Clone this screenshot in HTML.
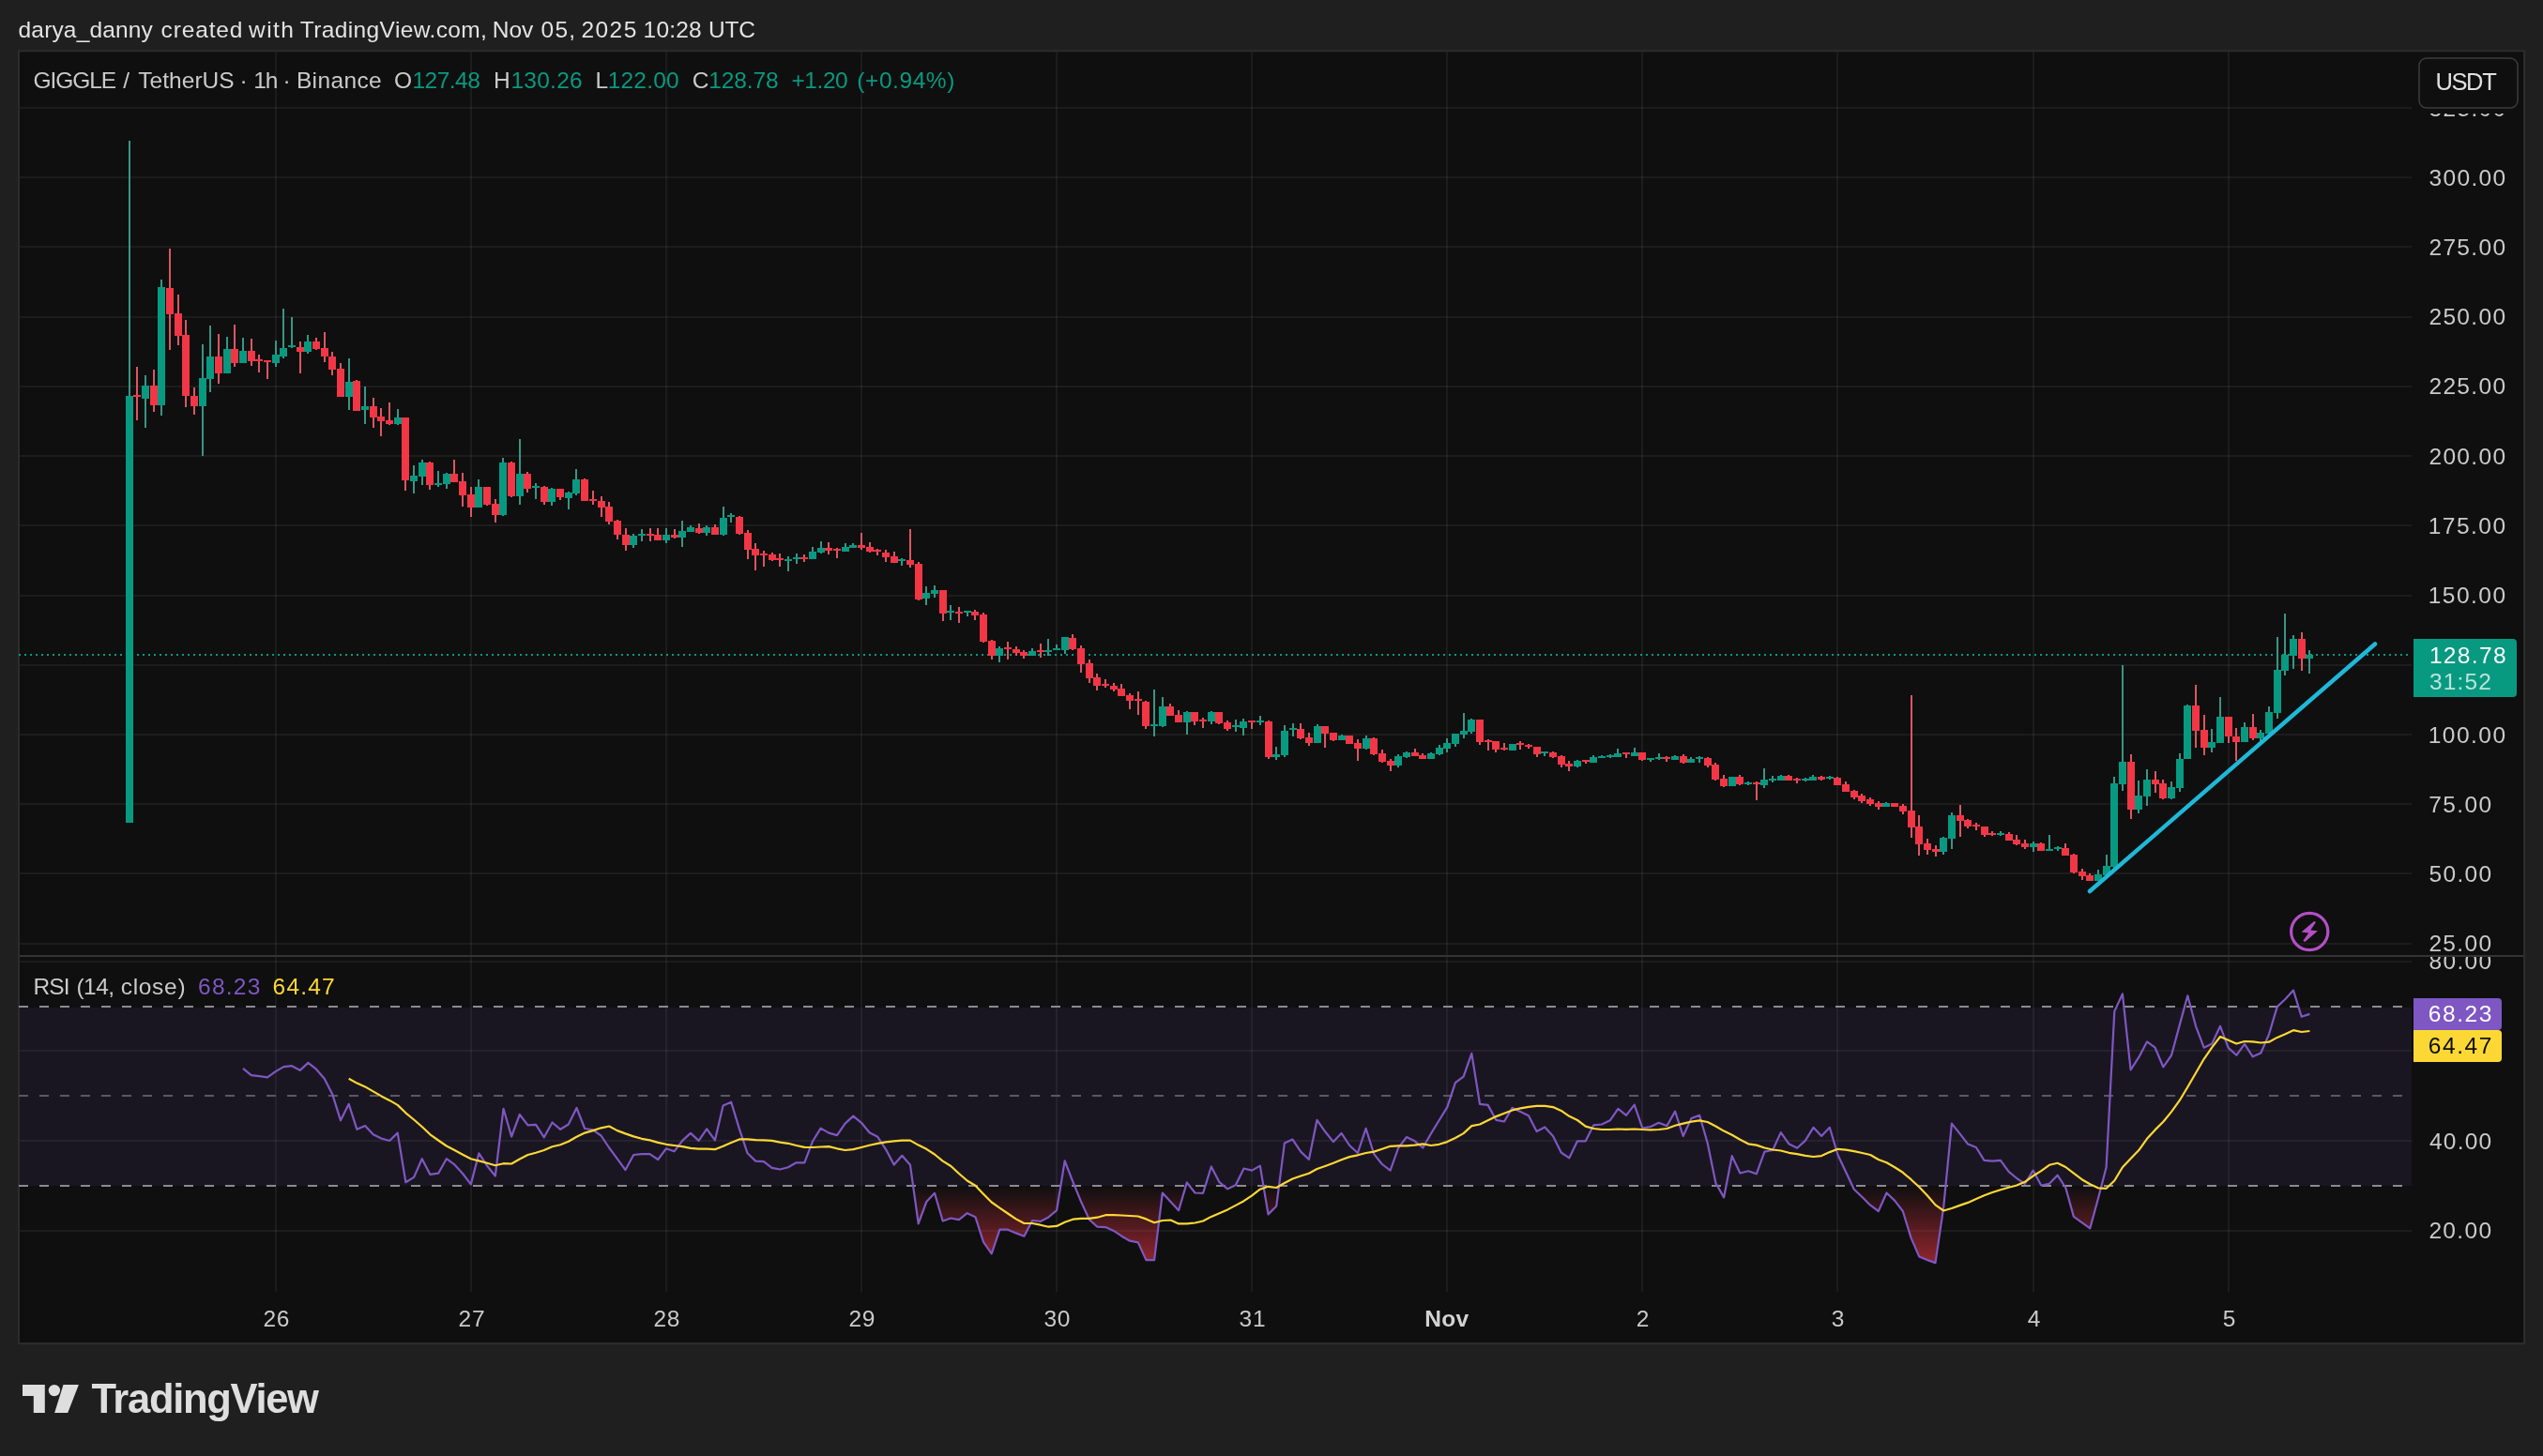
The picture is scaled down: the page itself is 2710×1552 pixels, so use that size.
<!DOCTYPE html><html><head><meta charset="utf-8"><title>GIGGLE / TetherUS</title>
<style>
html,body{margin:0;padding:0;background:#1f1f1f;}
body{width:2710px;height:1552px;overflow:hidden;position:relative;font-family:"Liberation Sans",sans-serif;}
svg{position:absolute;left:0;top:0;display:block;will-change:transform}
text{font-family:"Liberation Sans",sans-serif;white-space:pre}
</style></head><body>
<svg width="2710" height="1552" viewBox="0 0 2710 1552">
<rect x="0" y="0" width="2710" height="1552" fill="#1f1f1f"/>
<rect x="19" y="53.3" width="2672.3" height="1380" fill="#2c2c2c"/>
<rect x="21" y="55.3" width="2668" height="1375.7" fill="#0f0f0f"/>
<text x="19.60" y="40.1" font-size="24.5" fill="#e3e3e3" letter-spacing="0.150">darya_danny</text>
<text x="171.60" y="40.1" font-size="24.5" fill="#e3e3e3" letter-spacing="0.850">created</text>
<text x="265.10" y="40.1" font-size="24.5" fill="#e3e3e3" letter-spacing="1.433">with</text>
<text x="319.80" y="40.1" font-size="24.5" fill="#e3e3e3" letter-spacing="0.380">TradingView.com,</text>
<text x="524.80" y="40.1" font-size="24.5" fill="#e3e3e3" letter-spacing="0.000">Nov</text>
<text x="576.50" y="40.1" font-size="24.5" fill="#e3e3e3" letter-spacing="1.300">05,</text>
<text x="619.50" y="40.1" font-size="24.5" fill="#e3e3e3" letter-spacing="1.433">2025</text>
<text x="685.60" y="40.1" font-size="24.5" fill="#e3e3e3" letter-spacing="0.175">10:28</text>
<text x="754.90" y="40.1" font-size="24.5" fill="#e3e3e3" letter-spacing="-0.100">UTC</text>
<defs><linearGradient id="os" x1="0" y1="1263.8" x2="0" y2="1407.4" gradientUnits="userSpaceOnUse"><stop offset="0" stop-color="#f23645" stop-opacity="0"/><stop offset="1" stop-color="#f23645" stop-opacity="1"/></linearGradient><linearGradient id="ob" x1="0" y1="1072.4" x2="0" y2="928.9" gradientUnits="userSpaceOnUse"><stop offset="0" stop-color="#089981" stop-opacity="0"/><stop offset="1" stop-color="#089981" stop-opacity="1"/></linearGradient><clipPath id="cos"><rect x="22" y="1263.8" width="2548" height="113.2"/></clipPath><clipPath id="cob"><rect x="22" y="1020" width="2548" height="52.4"/></clipPath><clipPath id="cax"><rect x="2570" y="121" width="119" height="897"/></clipPath><clipPath id="crs"><rect x="2570" y="1020" width="119" height="357"/></clipPath></defs>
<rect x="21" y="1074" width="2549" height="190" fill="#7e57c2" fill-opacity="0.1"/>
<path d="M294 55.3V1377.5M502 55.3V1377.5M710 55.3V1377.5M918 55.3V1377.5M1126 55.3V1377.5M1334 55.3V1377.5M1542 55.3V1377.5M1750 55.3V1377.5M1958 55.3V1377.5M2167 55.3V1377.5M2375 55.3V1377.5" stroke="#ffffff" stroke-opacity="0.055" stroke-width="2" fill="none"/>
<path d="M21 1006H2570M21 931H2570M21 857H2570M21 783H2570M21 709H2570M21 635H2570M21 560H2570M21 486H2570M21 412H2570M21 338H2570M21 263H2570M21 189H2570M21 115H2570M21 1025H2570M21 1120H2570M21 1216H2570M21 1312H2570" stroke="#ffffff" stroke-opacity="0.055" stroke-width="2" fill="none"/>
<rect x="21" y="1018" width="2668" height="2" fill="#343434"/>
<path d="M20 1073H2570" stroke="#8c8a90" stroke-width="2" stroke-dasharray="10 12" fill="none"/>
<path d="M20 1168H2570" stroke="#5a5860" stroke-width="2" stroke-dasharray="10 12" fill="none"/>
<path d="M20 1264H2570" stroke="#8c8a90" stroke-width="2" stroke-dasharray="10 12" fill="none"/>
<path d="M259.0 1138.9L267.7 1146.2L276.3 1147.1L285.0 1148.4L293.7 1142.1L302.3 1137.1L311.0 1136.2L319.7 1140.9L328.4 1132.9L337.0 1139.7L345.7 1149.7L354.4 1166.8L363.0 1194.3L371.7 1176.8L380.4 1203.8L389.1 1200.1L397.7 1209.3L406.4 1213.5L415.1 1216.0L423.7 1207.6L432.4 1260.2L441.1 1254.9L449.7 1235.2L458.4 1251.9L467.1 1250.7L475.8 1235.2L484.4 1241.4L493.1 1251.0L501.8 1262.4L510.4 1229.3L519.1 1242.7L527.8 1253.5L536.5 1181.8L545.1 1211.5L553.8 1188.0L562.5 1199.3L571.1 1198.8L579.8 1212.3L588.5 1196.5L597.2 1203.8L605.8 1198.5L614.5 1181.0L623.2 1203.0L631.8 1204.3L640.5 1210.5L649.2 1223.5L657.8 1235.1L666.5 1247.1L675.2 1231.0L683.9 1230.1L692.5 1230.1L701.2 1236.0L709.9 1224.3L718.5 1227.3L727.2 1215.9L735.9 1207.9L744.6 1215.9L753.2 1203.4L761.9 1215.4L770.6 1178.4L779.2 1174.7L787.9 1203.4L796.6 1229.3L805.3 1237.6L813.9 1238.1L822.6 1244.8L831.3 1246.5L839.9 1244.3L848.6 1239.3L857.3 1239.3L865.9 1216.8L874.6 1202.6L883.3 1207.6L892.0 1210.1L900.6 1197.6L909.3 1189.6L918.0 1196.8L926.6 1207.3L935.3 1211.8L944.0 1225.1L952.7 1241.5L961.3 1231.8L970.0 1241.8L978.7 1304.4L987.3 1281.0L996.0 1271.8L1004.7 1301.5L1013.4 1298.5L1022.0 1300.2L1030.7 1293.2L1039.4 1297.2L1048.0 1323.9L1056.7 1336.4L1065.4 1310.7L1074.0 1310.7L1082.7 1314.4L1091.4 1317.7L1100.1 1301.0L1108.7 1301.9L1117.4 1297.4L1126.1 1290.2L1134.7 1237.3L1143.4 1259.8L1152.1 1281.0L1160.8 1299.9L1169.4 1307.7L1178.1 1308.1L1186.8 1311.9L1195.4 1317.7L1204.1 1322.7L1212.8 1324.4L1221.4 1343.1L1230.1 1343.1L1238.8 1271.5L1247.5 1281.0L1256.1 1290.2L1264.8 1260.5L1273.5 1271.5L1282.1 1271.8L1290.8 1243.5L1299.5 1260.2L1308.2 1267.3L1316.8 1263.2L1325.5 1245.5L1334.2 1247.6L1342.8 1242.6L1351.5 1294.4L1360.2 1285.7L1368.9 1218.4L1377.5 1214.6L1386.2 1227.6L1394.9 1236.0L1403.5 1193.8L1412.2 1206.3L1420.9 1217.1L1429.5 1207.9L1438.2 1221.0L1446.9 1229.0L1455.6 1202.9L1464.2 1230.1L1472.9 1241.0L1481.6 1247.7L1490.2 1223.5L1498.9 1212.1L1507.6 1216.3L1516.3 1223.5L1524.9 1208.5L1533.6 1194.3L1542.3 1180.1L1550.9 1154.2L1559.6 1147.6L1568.3 1122.9L1577.0 1176.8L1585.6 1177.9L1594.3 1193.8L1603.0 1195.5L1611.6 1180.9L1620.3 1185.1L1629.0 1189.3L1637.6 1206.0L1646.3 1201.5L1655.0 1211.0L1663.7 1228.5L1672.3 1234.3L1681.0 1216.3L1689.7 1216.3L1698.3 1199.3L1707.0 1198.5L1715.7 1194.3L1724.4 1181.8L1733.0 1188.8L1741.7 1177.6L1750.4 1202.6L1759.0 1201.0L1767.7 1196.8L1776.4 1200.1L1785.1 1184.6L1793.7 1211.0L1802.4 1192.1L1811.1 1188.8L1819.7 1218.5L1828.4 1261.0L1837.1 1276.4L1845.7 1232.2L1854.4 1250.5L1863.1 1248.2L1871.8 1251.3L1880.4 1227.6L1889.1 1226.0L1897.8 1207.1L1906.4 1219.3L1915.1 1223.8L1923.8 1215.9L1932.5 1201.8L1941.1 1210.9L1949.8 1201.8L1958.5 1231.0L1967.1 1249.3L1975.8 1267.7L1984.5 1276.0L1993.2 1284.7L2001.8 1291.0L2010.5 1271.5L2019.2 1279.9L2027.8 1291.0L2036.5 1319.4L2045.2 1339.4L2053.8 1343.1L2062.5 1346.1L2071.2 1286.9L2079.9 1197.6L2088.5 1208.4L2097.2 1219.6L2105.9 1223.0L2114.5 1236.8L2123.2 1237.6L2131.9 1236.8L2140.6 1248.8L2149.2 1256.0L2157.9 1261.8L2166.6 1247.6L2175.2 1263.5L2183.9 1261.8L2192.6 1252.7L2201.3 1266.0L2209.9 1296.9L2218.6 1303.2L2227.3 1309.4L2235.9 1277.7L2244.6 1244.3L2253.3 1078.1L2261.9 1059.4L2270.6 1140.4L2279.3 1126.9L2288.0 1110.4L2296.6 1116.7L2305.3 1137.3L2314.0 1125.0L2322.6 1093.1L2331.3 1061.3L2340.0 1093.8L2348.7 1116.7L2357.3 1112.5L2366.0 1093.8L2374.7 1116.9L2383.3 1124.8L2392.0 1112.9L2400.7 1126.3L2409.3 1122.5L2418.0 1102.5L2426.7 1073.1L2435.4 1065.0L2444.0 1055.6L2452.7 1083.8L2461.4 1080.9L2461.4 1263.8L259.0 1263.8Z" fill="url(#os)" clip-path="url(#cos)"/>
<path d="M259.0 1138.9L267.7 1146.2L276.3 1147.1L285.0 1148.4L293.7 1142.1L302.3 1137.1L311.0 1136.2L319.7 1140.9L328.4 1132.9L337.0 1139.7L345.7 1149.7L354.4 1166.8L363.0 1194.3L371.7 1176.8L380.4 1203.8L389.1 1200.1L397.7 1209.3L406.4 1213.5L415.1 1216.0L423.7 1207.6L432.4 1260.2L441.1 1254.9L449.7 1235.2L458.4 1251.9L467.1 1250.7L475.8 1235.2L484.4 1241.4L493.1 1251.0L501.8 1262.4L510.4 1229.3L519.1 1242.7L527.8 1253.5L536.5 1181.8L545.1 1211.5L553.8 1188.0L562.5 1199.3L571.1 1198.8L579.8 1212.3L588.5 1196.5L597.2 1203.8L605.8 1198.5L614.5 1181.0L623.2 1203.0L631.8 1204.3L640.5 1210.5L649.2 1223.5L657.8 1235.1L666.5 1247.1L675.2 1231.0L683.9 1230.1L692.5 1230.1L701.2 1236.0L709.9 1224.3L718.5 1227.3L727.2 1215.9L735.9 1207.9L744.6 1215.9L753.2 1203.4L761.9 1215.4L770.6 1178.4L779.2 1174.7L787.9 1203.4L796.6 1229.3L805.3 1237.6L813.9 1238.1L822.6 1244.8L831.3 1246.5L839.9 1244.3L848.6 1239.3L857.3 1239.3L865.9 1216.8L874.6 1202.6L883.3 1207.6L892.0 1210.1L900.6 1197.6L909.3 1189.6L918.0 1196.8L926.6 1207.3L935.3 1211.8L944.0 1225.1L952.7 1241.5L961.3 1231.8L970.0 1241.8L978.7 1304.4L987.3 1281.0L996.0 1271.8L1004.7 1301.5L1013.4 1298.5L1022.0 1300.2L1030.7 1293.2L1039.4 1297.2L1048.0 1323.9L1056.7 1336.4L1065.4 1310.7L1074.0 1310.7L1082.7 1314.4L1091.4 1317.7L1100.1 1301.0L1108.7 1301.9L1117.4 1297.4L1126.1 1290.2L1134.7 1237.3L1143.4 1259.8L1152.1 1281.0L1160.8 1299.9L1169.4 1307.7L1178.1 1308.1L1186.8 1311.9L1195.4 1317.7L1204.1 1322.7L1212.8 1324.4L1221.4 1343.1L1230.1 1343.1L1238.8 1271.5L1247.5 1281.0L1256.1 1290.2L1264.8 1260.5L1273.5 1271.5L1282.1 1271.8L1290.8 1243.5L1299.5 1260.2L1308.2 1267.3L1316.8 1263.2L1325.5 1245.5L1334.2 1247.6L1342.8 1242.6L1351.5 1294.4L1360.2 1285.7L1368.9 1218.4L1377.5 1214.6L1386.2 1227.6L1394.9 1236.0L1403.5 1193.8L1412.2 1206.3L1420.9 1217.1L1429.5 1207.9L1438.2 1221.0L1446.9 1229.0L1455.6 1202.9L1464.2 1230.1L1472.9 1241.0L1481.6 1247.7L1490.2 1223.5L1498.9 1212.1L1507.6 1216.3L1516.3 1223.5L1524.9 1208.5L1533.6 1194.3L1542.3 1180.1L1550.9 1154.2L1559.6 1147.6L1568.3 1122.9L1577.0 1176.8L1585.6 1177.9L1594.3 1193.8L1603.0 1195.5L1611.6 1180.9L1620.3 1185.1L1629.0 1189.3L1637.6 1206.0L1646.3 1201.5L1655.0 1211.0L1663.7 1228.5L1672.3 1234.3L1681.0 1216.3L1689.7 1216.3L1698.3 1199.3L1707.0 1198.5L1715.7 1194.3L1724.4 1181.8L1733.0 1188.8L1741.7 1177.6L1750.4 1202.6L1759.0 1201.0L1767.7 1196.8L1776.4 1200.1L1785.1 1184.6L1793.7 1211.0L1802.4 1192.1L1811.1 1188.8L1819.7 1218.5L1828.4 1261.0L1837.1 1276.4L1845.7 1232.2L1854.4 1250.5L1863.1 1248.2L1871.8 1251.3L1880.4 1227.6L1889.1 1226.0L1897.8 1207.1L1906.4 1219.3L1915.1 1223.8L1923.8 1215.9L1932.5 1201.8L1941.1 1210.9L1949.8 1201.8L1958.5 1231.0L1967.1 1249.3L1975.8 1267.7L1984.5 1276.0L1993.2 1284.7L2001.8 1291.0L2010.5 1271.5L2019.2 1279.9L2027.8 1291.0L2036.5 1319.4L2045.2 1339.4L2053.8 1343.1L2062.5 1346.1L2071.2 1286.9L2079.9 1197.6L2088.5 1208.4L2097.2 1219.6L2105.9 1223.0L2114.5 1236.8L2123.2 1237.6L2131.9 1236.8L2140.6 1248.8L2149.2 1256.0L2157.9 1261.8L2166.6 1247.6L2175.2 1263.5L2183.9 1261.8L2192.6 1252.7L2201.3 1266.0L2209.9 1296.9L2218.6 1303.2L2227.3 1309.4L2235.9 1277.7L2244.6 1244.3L2253.3 1078.1L2261.9 1059.4L2270.6 1140.4L2279.3 1126.9L2288.0 1110.4L2296.6 1116.7L2305.3 1137.3L2314.0 1125.0L2322.6 1093.1L2331.3 1061.3L2340.0 1093.8L2348.7 1116.7L2357.3 1112.5L2366.0 1093.8L2374.7 1116.9L2383.3 1124.8L2392.0 1112.9L2400.7 1126.3L2409.3 1122.5L2418.0 1102.5L2426.7 1073.1L2435.4 1065.0L2444.0 1055.6L2452.7 1083.8L2461.4 1080.9" stroke="#7e57c2" stroke-width="2.2" fill="none" stroke-linejoin="round"/>
<path d="M371.7 1149.7L380.4 1154.6L389.1 1158.4L397.7 1163.4L406.4 1168.4L415.1 1172.9L423.7 1177.9L432.4 1186.3L441.1 1193.5L449.7 1201.0L458.4 1209.3L467.1 1215.5L475.8 1221.5L484.4 1226.0L493.1 1230.7L501.8 1235.2L510.4 1237.4L519.1 1239.7L527.8 1242.2L536.5 1240.2L545.1 1240.5L553.8 1235.5L562.5 1231.0L571.1 1228.8L579.8 1226.0L588.5 1222.2L597.2 1220.2L605.8 1216.8L614.5 1211.8L623.2 1207.6L631.8 1205.1L640.5 1202.3L649.2 1200.5L657.8 1205.1L666.5 1208.4L675.2 1211.4L683.9 1213.8L692.5 1215.4L701.2 1217.9L709.9 1219.8L718.5 1221.0L727.2 1222.1L735.9 1223.8L744.6 1224.6L753.2 1224.6L761.9 1225.1L770.6 1221.8L779.2 1217.9L787.9 1214.4L796.6 1214.4L805.3 1215.1L813.9 1215.4L822.6 1215.9L831.3 1217.6L839.9 1218.8L848.6 1221.0L857.3 1222.8L865.9 1223.0L874.6 1222.5L883.3 1222.1L892.0 1224.3L900.6 1226.0L909.3 1225.1L918.0 1223.0L926.6 1220.8L935.3 1218.9L944.0 1217.3L952.7 1216.4L961.3 1215.6L970.0 1215.6L978.7 1220.6L987.3 1224.8L996.0 1230.5L1004.7 1237.6L1013.4 1243.0L1022.0 1251.0L1030.7 1258.5L1039.4 1263.8L1048.0 1272.7L1056.7 1281.5L1065.4 1287.7L1074.0 1293.5L1082.7 1299.4L1091.4 1304.0L1100.1 1304.0L1108.7 1305.7L1117.4 1307.7L1126.1 1306.9L1134.7 1302.7L1143.4 1299.7L1152.1 1298.9L1160.8 1298.9L1169.4 1297.7L1178.1 1295.2L1186.8 1295.2L1195.4 1295.5L1204.1 1296.0L1212.8 1296.5L1221.4 1299.4L1230.1 1303.2L1238.8 1301.0L1247.5 1300.5L1256.1 1304.4L1264.8 1304.4L1273.5 1303.5L1282.1 1301.5L1290.8 1296.9L1299.5 1293.2L1308.2 1289.4L1316.8 1284.9L1325.5 1280.2L1334.2 1274.3L1342.8 1267.7L1351.5 1264.8L1360.2 1266.0L1368.9 1261.0L1377.5 1256.5L1386.2 1253.5L1394.9 1250.7L1403.5 1246.0L1412.2 1243.0L1420.9 1239.8L1429.5 1236.3L1438.2 1233.1L1446.9 1231.3L1455.6 1229.0L1464.2 1227.6L1472.9 1224.8L1481.6 1221.8L1490.2 1221.3L1498.9 1221.3L1507.6 1220.7L1516.3 1219.3L1524.9 1221.0L1533.6 1219.8L1542.3 1217.1L1550.9 1213.0L1559.6 1208.1L1568.3 1200.1L1577.0 1198.5L1585.6 1194.3L1594.3 1190.1L1603.0 1186.8L1611.6 1183.4L1620.3 1181.4L1629.0 1179.8L1637.6 1178.8L1646.3 1178.8L1655.0 1180.1L1663.7 1183.9L1672.3 1189.8L1681.0 1194.0L1689.7 1200.6L1698.3 1203.0L1707.0 1204.0L1715.7 1204.0L1724.4 1203.5L1733.0 1203.8L1741.7 1203.5L1750.4 1204.0L1759.0 1204.3L1767.7 1204.0L1776.4 1203.0L1785.1 1199.8L1793.7 1197.6L1802.4 1195.6L1811.1 1194.3L1819.7 1196.0L1828.4 1200.5L1837.1 1205.6L1845.7 1209.8L1854.4 1214.8L1863.1 1219.3L1871.8 1220.6L1880.4 1223.5L1889.1 1225.5L1897.8 1226.5L1906.4 1228.8L1915.1 1230.1L1923.8 1231.8L1932.5 1233.0L1941.1 1232.1L1949.8 1228.1L1958.5 1224.8L1967.1 1225.6L1975.8 1227.1L1984.5 1229.0L1993.2 1231.0L2001.8 1236.0L2010.5 1239.3L2019.2 1244.3L2027.8 1249.8L2036.5 1257.2L2045.2 1265.2L2053.8 1274.3L2062.5 1284.4L2071.2 1290.5L2079.9 1288.0L2088.5 1284.9L2097.2 1281.9L2105.9 1278.0L2114.5 1274.3L2123.2 1271.0L2131.9 1268.2L2140.6 1265.7L2149.2 1263.5L2157.9 1259.8L2166.6 1253.5L2175.2 1248.1L2183.9 1241.8L2192.6 1239.8L2201.3 1244.0L2209.9 1250.7L2218.6 1257.2L2227.3 1262.3L2235.9 1266.3L2244.6 1266.8L2253.3 1258.5L2261.9 1244.3L2270.6 1235.1L2279.3 1226.1L2288.0 1213.8L2296.6 1204.4L2305.3 1195.7L2314.0 1185.1L2322.6 1173.2L2331.3 1158.8L2340.0 1143.8L2348.7 1128.8L2357.3 1116.3L2366.0 1105.0L2374.7 1108.8L2383.3 1112.5L2392.0 1110.0L2400.7 1110.3L2409.3 1111.5L2418.0 1110.7L2426.7 1105.9L2435.4 1102.3L2444.0 1098.2L2452.7 1100.0L2461.4 1099.0" stroke="#fdd835" stroke-width="2.2" fill="none" stroke-linejoin="round"/>
<path d="M20 698H2568" stroke="#089981" stroke-width="2" stroke-dasharray="2 4" fill="none"/>
<path d="M138 150V877M155 400V456M172 298V443M216 367V486M224 347V418M242 359V398M259 360V387M294 363V391M302 329V382M311 338V371M328 357V377M372 382V437M389 412V452M424 436V453M441 496V526M450 490V517M467 502V519M476 504V521M510 511V541M536 488V550M554 468V538M571 515V532M588 520V539M606 524V543M614 500V528M675 569V584M684 564V577M710 563V579M727 555V583M736 560V567M753 560V571M771 540V571M779 547V557M840 593V609M849 590V601M866 583V596M875 577V590M901 579V588M909 579V584M961 595V603M987 625V645M996 624V637M1013 645V661M1031 651V657M1065 689V706M1100 691V699M1117 681V699M1126 687V693M1135 679V697M1230 735V785M1239 743V775M1265 758V783M1291 758V772M1317 767V780M1325 766V784M1343 763V773M1360 796V810M1369 773V807M1378 771V785M1404 772V792M1430 783V789M1456 784V799M1490 804V818M1499 801V808M1525 802V809M1534 794V805M1542 787V802M1551 782V796M1560 760V787M1568 766V782M1612 793V800M1646 801V806M1681 810V818M1698 805V813M1707 805V808M1716 804V808M1724 798V807M1742 797V806M1759 808V812M1768 803V810M1785 805V810M1802 807V813M1811 806V813M1846 828V838M1863 833V837M1880 819V840M1889 827V834M1898 826V832M1924 829V833M1932 826V832M1950 827V831M2010 855V860M2071 892V911M2080 866V905M2132 886V891M2167 897V908M2184 890V907M2193 902V907M2236 927V939M2245 911V934M2253 828V927M2262 709V843M2279 832V867M2288 820V859M2314 833V852M2323 803V844M2331 751V809M2357 777V802M2366 743V792M2392 770V791M2409 778V794M2418 753V782M2427 679V766M2435 654V720M2444 677V713M2461 693V718" stroke="#3a9585" stroke-width="2" fill="none"/>
<path d="M146 391V448M164 394V439M181 265V373M190 314V368M198 341V434M207 413V442M233 356V409M250 346V391M268 361V390M276 378V397M285 384V404M320 364V398M337 360V373M346 354V386M354 375V400M363 387V423M380 405V438M398 424V456M406 435V465M415 429V453M432 445V523M458 492V522M484 490V514M493 504V540M502 519V551M519 519V539M528 532V557M545 492V530M562 503V525M580 518V538M597 521V533M623 510V534M632 523V538M641 529V551M649 535V559M658 554V575M667 563V587M693 563V577M701 563V576M719 564V574M745 558V569M762 559V570M788 550V570M797 565V596M805 579V608M814 587V604M823 589V598M831 590V604M857 591V599M883 578V591M892 584V595M918 568V586M927 578V589M935 585V592M944 586V599M953 588V600M970 564V605M979 599V640M1005 629V662M1022 647V664M1039 650V661M1048 653V685M1057 682V703M1074 684V703M1083 689V699M1091 693V702M1109 686V701M1143 676V693M1152 688V717M1161 703V728M1169 718V736M1178 724V733M1187 728V737M1195 729V742M1204 739V756M1213 737V762M1221 747V777M1247 750V763M1256 757V770M1273 759V773M1282 765V776M1299 759V772M1308 768V779M1334 768V777M1352 768V809M1386 771V788M1395 781V795M1412 774V797M1421 781V790M1438 784V793M1447 788V811M1464 786V805M1473 799V813M1482 809V822M1508 798V806M1516 803V809M1577 767V794M1586 788V800M1594 790V802M1603 792V800M1620 790V799M1629 793V798M1638 796V807M1655 801V808M1664 805V818M1672 811V822M1690 810V814M1733 802V808M1750 802V811M1776 806V812M1794 804V814M1820 807V818M1828 813V832M1837 826V839M1854 826V837M1872 833V853M1906 826V832M1915 829V835M1941 827V832M1958 828V837M1967 833V844M1976 842V852M1984 846V856M1993 850V859M2002 854V863M2019 856V860M2028 857V868M2037 741V893M2045 869V912M2054 894V911M2063 901V913M2089 858V892M2097 873V883M2106 877V885M2115 881V892M2123 886V891M2141 887V896M2149 890V901M2158 895V905M2175 898V907M2201 899V912M2210 910V931M2219 926V938M2227 931V939M2271 804V873M2297 822V845M2305 831V852M2340 730V797M2349 762V805M2375 764V792M2383 776V811M2401 761V789M2453 674V715" stroke="#dc5663" stroke-width="2" fill="none"/>
<path d="M134 422h8V877h-8zM151 411h8V425h-8zM168 306h8V432h-8zM212 403h8V433h-8zM220 380h8V404h-8zM238 372h8V398h-8zM255 374h8V387h-8zM290 378h8V387h-8zM298 371h8V380h-8zM307 368h8V370h-8zM324 364h8V375h-8zM368 407h8V423h-8zM385 433h8V437h-8zM420 445h8V452h-8zM437 507h8V513h-8zM446 493h8V508h-8zM463 515h8V517h-8zM472 505h8V516h-8zM506 519h8V541h-8zM532 493h8V549h-8zM550 505h8V529h-8zM567 518h8V520h-8zM584 521h8V535h-8zM602 525h8V531h-8zM610 511h8V526h-8zM671 571h8V581h-8zM680 569h8V571h-8zM706 570h8V576h-8zM723 566h8V573h-8zM732 562h8V567h-8zM749 562h8V568h-8zM767 552h8V570h-8zM775 549h8V551h-8zM836 596h8V598h-8zM845 594h8V596h-8zM862 588h8V596h-8zM871 584h8V589h-8zM897 583h8V588h-8zM905 581h8V584h-8zM957 596h8V598h-8zM983 632h8V638h-8zM992 629h8V633h-8zM1009 651h8V653h-8zM1027 651h8V653h-8zM1061 691h8V699h-8zM1096 694h8V699h-8zM1113 693h8V695h-8zM1122 691h8V693h-8zM1131 679h8V693h-8zM1226 772h8V774h-8zM1235 753h8V774h-8zM1261 759h8V770h-8zM1287 759h8V769h-8zM1313 773h8V775h-8zM1321 769h8V776h-8zM1339 768h8V770h-8zM1356 804h8V807h-8zM1365 779h8V805h-8zM1374 776h8V778h-8zM1400 774h8V792h-8zM1426 784h8V789h-8zM1452 787h8V798h-8zM1486 806h8V816h-8zM1495 802h8V807h-8zM1521 803h8V809h-8zM1530 797h8V804h-8zM1538 792h8V798h-8zM1547 782h8V793h-8zM1556 779h8V783h-8zM1564 767h8V780h-8zM1608 793h8V800h-8zM1642 801h8V803h-8zM1677 811h8V817h-8zM1694 807h8V813h-8zM1703 806h8V808h-8zM1712 805h8V807h-8zM1720 803h8V807h-8zM1738 802h8V806h-8zM1755 808h8V810h-8zM1764 807h8V809h-8zM1781 806h8V810h-8zM1798 809h8V813h-8zM1807 807h8V809h-8zM1842 828h8V838h-8zM1859 834h8V836h-8zM1876 831h8V837h-8zM1885 830h8V832h-8zM1894 827h8V832h-8zM1920 830h8V832h-8zM1928 828h8V832h-8zM1946 828h8V830h-8zM2006 856h8V860h-8zM2067 893h8V908h-8zM2076 869h8V894h-8zM2128 888h8V890h-8zM2163 899h8V903h-8zM2180 905h8V907h-8zM2189 903h8V905h-8zM2232 932h8V939h-8zM2241 923h8V933h-8zM2249 835h8V924h-8zM2258 812h8V836h-8zM2275 848h8V863h-8zM2284 831h8V849h-8zM2310 839h8V851h-8zM2319 809h8V840h-8zM2327 752h8V809h-8zM2353 791h8V797h-8zM2362 764h8V792h-8zM2388 775h8V791h-8zM2405 781h8V787h-8zM2414 759h8V782h-8zM2423 714h8V760h-8zM2431 698h8V715h-8zM2440 681h8V699h-8zM2457 698h8V702h-8z" fill="#089981"/>
<path d="M142 421h8V423h-8zM160 411h8V432h-8zM177 307h8V335h-8zM186 334h8V358h-8zM194 357h8V422h-8zM203 422h8V433h-8zM229 380h8V398h-8zM246 372h8V387h-8zM264 374h8V385h-8zM272 383h8V385h-8zM281 384h8V386h-8zM316 370h8V375h-8zM333 364h8V372h-8zM342 371h8V380h-8zM350 380h8V394h-8zM359 393h8V423h-8zM376 406h8V438h-8zM394 433h8V445h-8zM402 444h8V449h-8zM411 448h8V452h-8zM428 445h8V512h-8zM454 493h8V517h-8zM480 505h8V514h-8zM489 513h8V528h-8zM498 527h8V541h-8zM515 519h8V538h-8zM524 537h8V549h-8zM541 493h8V529h-8zM558 505h8V521h-8zM576 519h8V535h-8zM593 521h8V530h-8zM619 511h8V534h-8zM628 532h8V534h-8zM637 534h8V541h-8zM645 540h8V556h-8zM654 555h8V570h-8zM663 570h8V581h-8zM689 569h8V571h-8zM697 570h8V576h-8zM715 570h8V573h-8zM741 563h8V568h-8zM758 562h8V570h-8zM784 551h8V569h-8zM793 568h8V586h-8zM801 585h8V592h-8zM810 590h8V592h-8zM819 591h8V597h-8zM827 595h8V597h-8zM853 594h8V596h-8zM879 584h8V587h-8zM888 585h8V587h-8zM914 581h8V584h-8zM923 583h8V588h-8zM931 586h8V588h-8zM940 589h8V594h-8zM949 593h8V600h-8zM966 597h8V602h-8zM975 601h8V639h-8zM1001 629h8V654h-8zM1018 652h8V654h-8zM1035 652h8V656h-8zM1044 655h8V684h-8zM1053 683h8V699h-8zM1070 690h8V692h-8zM1079 692h8V696h-8zM1087 695h8V699h-8zM1105 693h8V695h-8zM1139 680h8V692h-8zM1148 691h8V708h-8zM1157 707h8V723h-8zM1165 722h8V731h-8zM1174 729h8V731h-8zM1183 731h8V735h-8zM1191 734h8V742h-8zM1200 741h8V747h-8zM1209 745h8V747h-8zM1217 748h8V774h-8zM1243 753h8V763h-8zM1252 762h8V770h-8zM1269 759h8V769h-8zM1278 767h8V769h-8zM1295 759h8V771h-8zM1304 770h8V777h-8zM1330 768h8V770h-8zM1348 769h8V807h-8zM1382 777h8V787h-8zM1391 786h8V792h-8zM1408 774h8V782h-8zM1417 781h8V789h-8zM1434 784h8V793h-8zM1443 792h8V798h-8zM1460 787h8V804h-8zM1469 803h8V812h-8zM1478 811h8V816h-8zM1504 802h8V806h-8zM1512 805h8V809h-8zM1573 767h8V791h-8zM1582 789h8V791h-8zM1590 790h8V799h-8zM1599 797h8V799h-8zM1616 792h8V794h-8zM1625 794h8V796h-8zM1634 796h8V804h-8zM1651 802h8V807h-8zM1660 806h8V815h-8zM1668 814h8V817h-8zM1686 810h8V812h-8zM1729 802h8V804h-8zM1746 802h8V810h-8zM1772 807h8V809h-8zM1790 806h8V813h-8zM1816 808h8V816h-8zM1824 815h8V831h-8zM1833 830h8V838h-8zM1850 828h8V836h-8zM1868 834h8V836h-8zM1902 827h8V832h-8zM1911 830h8V832h-8zM1937 828h8V831h-8zM1954 829h8V837h-8zM1963 836h8V844h-8zM1972 843h8V850h-8zM1980 848h8V854h-8zM1989 852h8V857h-8zM1998 856h8V860h-8zM2015 856h8V860h-8zM2024 859h8V865h-8zM2033 864h8V882h-8zM2041 881h8V900h-8zM2050 899h8V906h-8zM2059 905h8V908h-8zM2085 869h8V875h-8zM2093 874h8V881h-8zM2102 879h8V881h-8zM2111 881h8V890h-8zM2119 888h8V890h-8zM2137 889h8V896h-8zM2145 895h8V900h-8zM2154 899h8V903h-8zM2171 899h8V907h-8zM2197 904h8V912h-8zM2206 911h8V930h-8zM2215 929h8V934h-8zM2223 933h8V939h-8zM2267 812h8V863h-8zM2293 831h8V836h-8zM2301 835h8V851h-8zM2336 752h8V779h-8zM2345 778h8V797h-8zM2371 764h8V785h-8zM2379 785h8V791h-8zM2397 775h8V787h-8zM2449 681h8V702h-8z" fill="#f23645"/>
<path d="M2227 950L2531 686.5" stroke="#1fb8d8" stroke-width="4.5" stroke-linecap="round" fill="none"/>
<circle cx="2461.2" cy="993" r="19.6" stroke="#b34fc6" stroke-width="3.2" fill="none"/><path d="M2466.1 982.1L2468 983.1L2462.3 991.4L2469.9 992.3L2456.3 1004L2454.3 1002.7L2460.3 994.5L2452.5 993.5Z" fill="#b34fc6"/>
<text x="35.50" y="93.8" font-size="24.5" fill="#cacaca" letter-spacing="-1.080">GIGGLE</text>
<text x="131.30" y="93.8" font-size="24.5" fill="#cacaca" letter-spacing="0.000">/</text>
<text x="147.20" y="93.8" font-size="24.5" fill="#cacaca" letter-spacing="0.057">TetherUS</text>
<text x="255.60" y="93.8" font-size="24.5" fill="#cacaca" letter-spacing="0.000">·</text>
<text x="270.30" y="93.8" font-size="24.5" fill="#cacaca" letter-spacing="-1.100">1h</text>
<text x="301.50" y="93.8" font-size="24.5" fill="#cacaca" letter-spacing="0.000">·</text>
<text x="315.90" y="93.8" font-size="24.5" fill="#cacaca" letter-spacing="0.367">Binance</text>
<text x="420.10" y="93.8" font-size="24.5" fill="#cacaca" letter-spacing="0.000">O</text>
<text x="439.40" y="93.8" font-size="24.5" fill="#089981" letter-spacing="-0.500">127.48</text>
<text x="526.00" y="93.8" font-size="24.5" fill="#cacaca" letter-spacing="0.000">H</text>
<text x="544.40" y="93.8" font-size="24.5" fill="#089981" letter-spacing="0.280">130.26</text>
<text x="634.40" y="93.8" font-size="24.5" fill="#cacaca" letter-spacing="0.000">L</text>
<text x="647.70" y="93.8" font-size="24.5" fill="#089981" letter-spacing="0.200">122.00</text>
<text x="737.70" y="93.8" font-size="24.5" fill="#cacaca" letter-spacing="0.000">C</text>
<text x="755.30" y="93.8" font-size="24.5" fill="#089981" letter-spacing="-0.140">128.78</text>
<text x="843.50" y="93.8" font-size="24.5" fill="#089981" letter-spacing="-0.450">+1.20</text>
<text x="913.30" y="93.8" font-size="24.5" fill="#089981" letter-spacing="0.571">(+0.94%)</text>
<text x="35.40" y="1059.7" font-size="24.5" fill="#cacaca" letter-spacing="-0.900">RSI</text>
<text x="81.50" y="1059.7" font-size="24.5" fill="#cacaca" letter-spacing="-0.567">(14,</text>
<text x="128.70" y="1059.7" font-size="24.5" fill="#cacaca" letter-spacing="0.700">close)</text>
<text x="211.00" y="1059.7" font-size="24.5" fill="#7e57c2" letter-spacing="1.250">68.23</text>
<text x="290.60" y="1059.7" font-size="24.5" fill="#fdd835" letter-spacing="1.200">64.47</text>
<g clip-path="url(#cax)">
<text x="2588.40" y="1014.2" font-size="24.5" fill="#cacaca" letter-spacing="1.350">25.00</text>
<text x="2588.60" y="940.0" font-size="24.5" fill="#cacaca" letter-spacing="1.300">50.00</text>
<text x="2588.30" y="865.7" font-size="24.5" fill="#cacaca" letter-spacing="1.375">75.00</text>
<text x="2587.70" y="791.5" font-size="24.5" fill="#cacaca" letter-spacing="1.500">100.00</text>
<text x="2587.70" y="643.1" font-size="24.5" fill="#cacaca" letter-spacing="1.500">150.00</text>
<text x="2587.70" y="568.8" font-size="24.5" fill="#cacaca" letter-spacing="1.500">175.00</text>
<text x="2588.40" y="494.6" font-size="24.5" fill="#cacaca" letter-spacing="1.360">200.00</text>
<text x="2588.40" y="420.4" font-size="24.5" fill="#cacaca" letter-spacing="1.360">225.00</text>
<text x="2588.40" y="346.2" font-size="24.5" fill="#cacaca" letter-spacing="1.360">250.00</text>
<text x="2588.40" y="271.9" font-size="24.5" fill="#cacaca" letter-spacing="1.360">275.00</text>
<text x="2588.60" y="197.7" font-size="24.5" fill="#cacaca" letter-spacing="1.320">300.00</text>
<text x="2588.60" y="123.5" font-size="24.5" fill="#cacaca" letter-spacing="1.320">325.00</text>
</g>
<g clip-path="url(#crs)">
<text x="2588.50" y="1033.1" font-size="24.5" fill="#cacaca" letter-spacing="1.325">80.00</text>
<text x="2589.00" y="1224.5" font-size="24.5" fill="#cacaca" letter-spacing="1.200">40.00</text>
<text x="2588.40" y="1320.2" font-size="24.5" fill="#cacaca" letter-spacing="1.350">20.00</text>
</g>
<rect x="2578" y="62" width="105" height="53" rx="8" ry="8" fill="#0f0f0f" stroke="#3c3c3c" stroke-width="1.5"/>
<text x="2595.40" y="96.3" font-size="25.5" fill="#e0e0e0" letter-spacing="-1.367">USDT</text>
<path d="M2572 681H2678a4 4 0 0 1 4 4V739a4 4 0 0 1 -4 4H2572Z" fill="#089981"/>
<text x="2588.90" y="707.4" font-size="24.5" fill="#ffffff" letter-spacing="1.340">128.78</text>
<text x="2589.00" y="735.2" font-size="24.5" fill="#ffffff" letter-spacing="1.150" fill-opacity="0.72">31:52</text>
<path d="M2572 1064H2662a4 4 0 0 1 4 4V1094a4 4 0 0 1 -4 4H2572Z" fill="#7e57c2"/>
<path d="M2572 1098H2662a4 4 0 0 1 4 4V1128a4 4 0 0 1 -4 4H2572Z" fill="#fdd835"/>
<text x="2587.80" y="1089.1" font-size="24.5" fill="#ffffff" letter-spacing="1.550">68.23</text>
<text x="2587.80" y="1123.4" font-size="24.5" fill="#0f0f0f" letter-spacing="1.575">64.47</text>
<text x="280.45" y="1414.4" font-size="24.5" fill="#cacaca" letter-spacing="0.800">26</text>
<text x="488.50" y="1414.4" font-size="24.5" fill="#cacaca" letter-spacing="0.800">27</text>
<text x="696.40" y="1414.4" font-size="24.5" fill="#cacaca" letter-spacing="0.800">28</text>
<text x="904.45" y="1414.4" font-size="24.5" fill="#cacaca" letter-spacing="0.800">29</text>
<text x="1112.45" y="1414.4" font-size="24.5" fill="#cacaca" letter-spacing="0.800">30</text>
<text x="1320.60" y="1414.4" font-size="24.5" fill="#cacaca" letter-spacing="0.800">31</text>
<text x="1518.30" y="1414.4" font-size="24.5" fill="#d2d2d2" letter-spacing="0.250" font-weight="bold">Nov</text>
<text x="1743.70" y="1414.4" font-size="24.5" fill="#cacaca" letter-spacing="0.800">2</text>
<text x="1951.75" y="1414.4" font-size="24.5" fill="#cacaca" letter-spacing="0.800">3</text>
<text x="2160.75" y="1414.4" font-size="24.5" fill="#cacaca" letter-spacing="0.800">4</text>
<text x="2368.70" y="1414.4" font-size="24.5" fill="#cacaca" letter-spacing="0.800">5</text>
<g fill="#dedede"><path d="M24 1476H47.8V1506.1H35.8V1488.1H24Z"/><circle cx="57.9" cy="1482.1" r="6.2"/><path d="M67.5 1476H83.9L72.2 1506.1H58.1Z"/></g>
<text x="97.50" y="1506.1" font-size="43.5" fill="#dedede" letter-spacing="-1.300" font-weight="bold">TradingView</text>
</svg></body></html>
